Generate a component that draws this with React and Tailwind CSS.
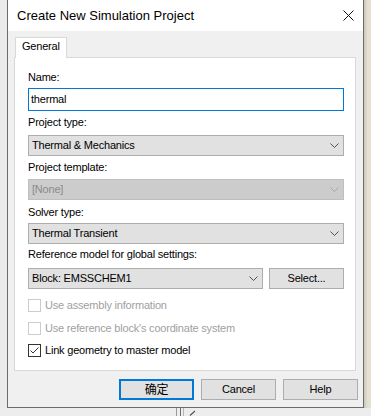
import React from 'react'

const font = { fontFamily: '"Liberation Sans", "Noto Sans CJK SC", sans-serif' }

const Chevron = ({ color = '#404040' }) => (
  <svg width="9" height="5" viewBox="0 0 9 5" className="shrink-0">
    <path d="M0.5 0.5 L4.5 4.5 L8.5 0.5" fill="none" stroke={color} strokeWidth="1" />
  </svg>
)

const Select = ({ value, disabled, className = '' }) => (
  <div
    className={`h-[21px] flex items-center pl-[3px] pr-[4px] border ${
      disabled ? 'bg-[#cccccc] border-[#bfbfbf] text-[#8a8a8a]' : 'bg-[#e1e1e1] border-[#adadad] text-black'
    } ${className}`}
  >
    <span className="flex-1 leading-[15px]">{value}</span>
    <Chevron color={disabled ? '#a8a8a8' : '#505050'} />
  </div>
)

const Label = ({ children, className = '' }) => (
  <div className={`leading-[15px] text-black ${className}`}>{children}</div>
)

const Check = ({ label, checked, disabled, className = '' }) => (
  <div className={`flex items-center h-[15px] ${className}`}>
    <div
      className={`w-[13px] h-[13px] border flex items-center justify-center bg-white ${
        disabled ? 'border-[#cccccc]' : 'border-[#333333]'
      }`}
    >
      {checked && (
        <svg width="11" height="11" viewBox="0 0 11 11">
          <path d="M1.5 5.5 L4 8 L9.5 2.5" fill="none" stroke="#333" strokeWidth="1" />
        </svg>
      )}
    </div>
    <span className={`ml-[4px] leading-[15px] ${disabled ? 'text-[#a0a0a0]' : 'text-black'}`}>{label}</span>
  </div>
)

const Button = ({ children, primary }) => (
  <div
    className={`w-[75px] h-[21px] flex items-center justify-center bg-[#e1e1e1] text-black ${
      primary ? 'border-2 border-[#0078d7]' : 'border border-[#adadad]'
    }`}
  >
    {children}
  </div>
)

export default function App() {
  return (
    <div
      className="w-[371px] h-[416px] overflow-hidden bg-[#ececec] flex flex-col text-[11px] tracking-[-0.2px]"
      style={font}
    >
      <div className="flex h-[409px]">
        {/* shadow left */}
        <div className="w-[7px] bg-[#ebebeb]" />

        {/* dialog window */}
        <div className="w-[357px] border-x border-b border-[#6b6b6b] flex flex-col">
          {/* title bar */}
          <div className="h-[31px] bg-white flex items-center pl-[9px] pr-[9px]">
            <span className="text-[13px] tracking-normal leading-[31px] text-black">Create New Simulation Project</span>
            <svg width="11" height="11" viewBox="0 0 11 11" className="ml-auto">
              <path d="M0.5 0.5 L10.5 10.5 M10.5 0.5 L0.5 10.5" fill="none" stroke="#111" strokeWidth="1" />
            </svg>
          </div>

          {/* body */}
          <div className="flex-1 bg-[#f0f0f0] pt-[6px] pl-[6px] flex flex-col">
            <div className="relative z-10 -mb-px ml-[1px] w-[52px] h-[21px] bg-white border-t border-x border-[#d9d9d9] pl-[6px] pt-[1px] leading-[15px] text-black">
              General
            </div>

            {/* tab panel */}
            <div className="w-[342px] h-[314px] bg-white border border-[#d9d9d9] pt-[12px] pl-[13px] pr-[11px]">
              <Label>Name:</Label>
              <div className="mt-[3px] h-[23px] border border-[#0078d7] bg-white flex items-center pl-[2px] leading-[15px] text-black">
                thermal
              </div>

              <Label className="mt-[4px]">Project type:</Label>
              <Select value="Thermal & Mechanics" className="mt-[5px]" />

              <Label className="mt-[4px]">Project template:</Label>
              <Select value="[None]" disabled className="mt-[4px]" />

              <Label className="mt-[5px]">Solver type:</Label>
              <Select value="Thermal Transient" className="mt-[3px]" />

              <Label className="mt-[3px]">Reference model for global settings:</Label>
              <div className="mt-[6px] flex gap-[6px]">
                <Select value="Block: EMSSCHEM1" className="w-[235px]" />
                <div className="flex-1 h-[21px] bg-[#e1e1e1] border border-[#adadad] flex items-center justify-center text-black">
                  Select...
                </div>
              </div>

              <Check className="mt-[9px]" label="Use assembly information" disabled />
              <Check className="mt-[8px]" label="Use reference block's coordinate system" disabled />
              <Check className="mt-[7px]" label="Link geometry to master model" checked />
            </div>

            {/* buttons */}
            <div className="mt-[8px] flex justify-end gap-[7px] pr-[5px]">
              <Button primary>
                <span className="text-[12px]">确定</span>
              </Button>
              <Button>Cancel</Button>
              <Button>Help</Button>
            </div>
          </div>
        </div>

        {/* background right */}
        <div className="w-[7px] bg-gradient-to-r from-[#c9c7bd] via-[#e3e0cf] to-[#e6e3d3]" />
      </div>

      {/* strip below the window */}
      <div className="flex-1 flex items-stretch bg-[#ededed]">
        <div className="ml-[176px] w-px bg-[#9a9a9a]" />
        <div className="ml-[3px] w-px bg-[#6e6e6e]" />
        <div className="ml-[2px] w-px bg-[#b5b5b5]" />
        <svg width="8" height="7" viewBox="0 0 8 7" className="ml-[5px] mt-[1px]">
          <path d="M1 6.5 L6 2" stroke="#555" strokeWidth="1.2" />
        </svg>
      </div>
    </div>
  )
}
